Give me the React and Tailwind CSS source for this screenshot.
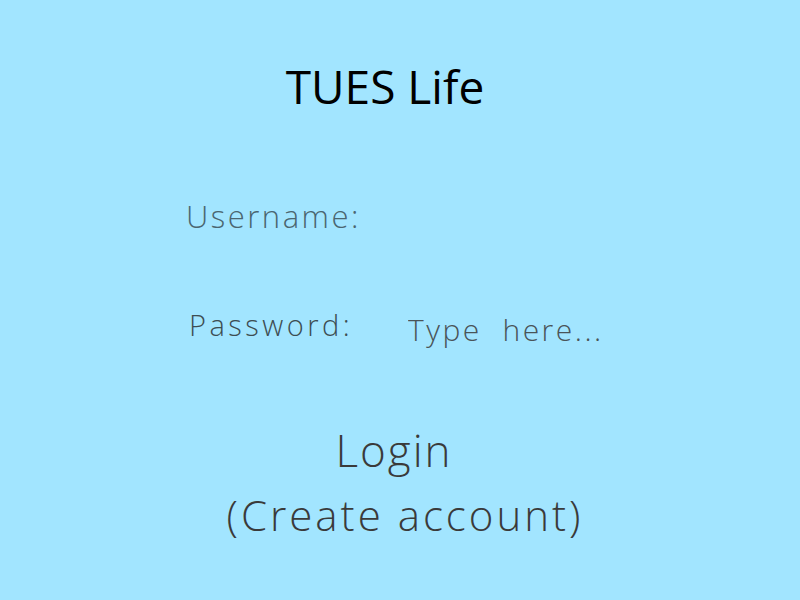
export default function App() {
  return (
    <div
      className="flex h-[600px] w-[800px] flex-col bg-[#a2e5ff] text-[#3a3a3a]"
      style={{ fontFamily: '"Open Sans", "Liberation Sans", sans-serif' }}
    >
      <h1 className="mt-[56px] pr-[30px] text-center text-[46px] font-normal leading-[60px] text-black">
        TUES Life
      </h1>

      <div className="mt-[80px] flex flex-col pl-[186px]">
        <label className="text-[31px] font-light leading-[40px] tracking-[2.5px] text-[#4b6570]">
          Username:
        </label>
        <div className="mt-[64px] flex items-center">
          <label className="w-[222px] pl-[3px] text-[29px] font-light leading-[40px] tracking-[3.5px] text-[#3d4d52]">
            Password:
          </label>
          <input
            type="password"
            placeholder="Type  here..."
            className="mt-[10px] w-[260px] bg-transparent text-[30px] font-light leading-[40px] tracking-[2.5px] text-[#4a5458] outline-none placeholder:text-[#4a5458]"
          />
        </div>
      </div>

      <div className="mt-[72px] flex flex-col items-center">
        <button className="pr-[12px] text-[44px] font-light leading-[56px] tracking-[2px] text-[#3a3a3a]">
          Login
        </button>
        <button className="mt-[9px] pl-[10px] text-[42px] font-light leading-[56px] tracking-[3px] text-[#3a3a3a]">
          (Create account)
        </button>
      </div>
    </div>
  );
}
